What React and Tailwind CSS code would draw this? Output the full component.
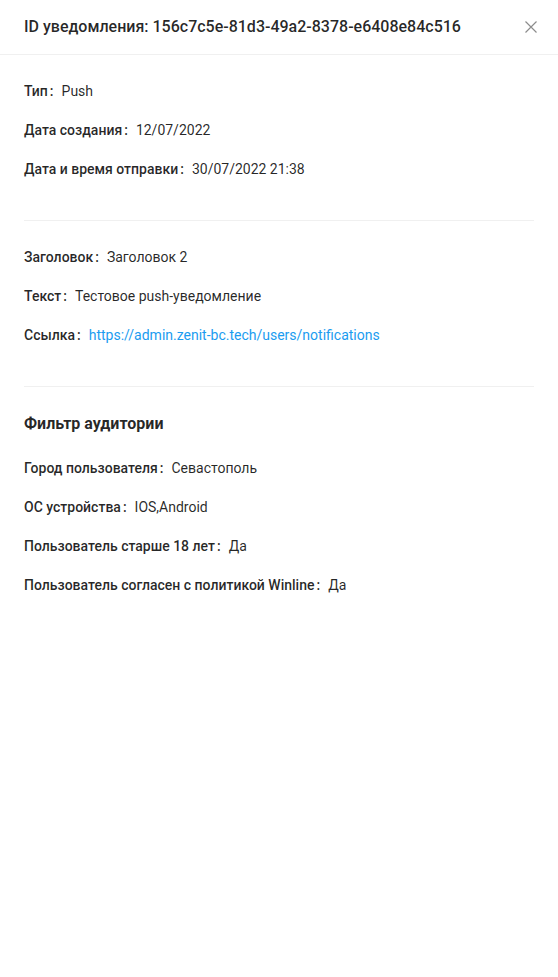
import React from "react";

function Row({ label, children }) {
  return (
    <div className="flex pb-[17px] text-[14px] leading-[22px] text-[rgba(0,0,0,0.85)]">
      <span className="font-medium">{label}</span>
      <span className="ml-[2px] mr-2 font-medium">:</span>
      <span>{children}</span>
    </div>
  );
}

function Divider() {
  return <div className="mt-[23px] mb-[25px] h-px bg-[#f0f0f0]" />;
}

export default function App() {
  return (
    <div className="min-h-[977px] w-[558px] bg-white font-['Roboto',sans-serif]">
      <div className="flex h-[55px] items-center justify-between border-b border-[#f0f0f0] px-6">
        <div className="text-[16px] font-medium leading-[22px] text-[rgba(0,0,0,0.85)]">
          ID уведомления: 156c7c5e-81d3-49a2-8378-e6408e84c516
        </div>
        <svg width="12" height="12" viewBox="0 0 12 12" className="mr-[-3px] text-[rgba(0,0,0,0.45)]">
          <path d="M0.5 0.5L11.5 11.5M11.5 0.5L0.5 11.5" stroke="currentColor" strokeWidth="1.2" fill="none" />
        </svg>
      </div>
      <div className="px-6 pt-[25px]">
        <Row label="Тип">Push</Row>
        <Row label="Дата создания">12/07/2022</Row>
        <Row label="Дата и время отправки">30/07/2022 21:38</Row>
        <Divider />
        <Row label="Заголовок">Заголовок 2</Row>
        <Row label="Текст">Тестовое push-уведомление</Row>
        <Row label="Ссылка">
          <a className="text-[#1a9cf0]" href="#">https://admin.zenit-bc.tech/users/notifications</a>
        </Row>
        <Divider />
        <div className="mb-[21px] text-[16px] font-bold leading-6 text-[rgba(0,0,0,0.85)]">Фильтр аудитории</div>
        <Row label="Город пользователя">Севастополь</Row>
        <Row label="ОС устройства">IOS,Android</Row>
        <Row label="Пользователь старше 18 лет">Да</Row>
        <Row label="Пользователь согласен с политикой Winline">Да</Row>
      </div>
    </div>
  );
}
